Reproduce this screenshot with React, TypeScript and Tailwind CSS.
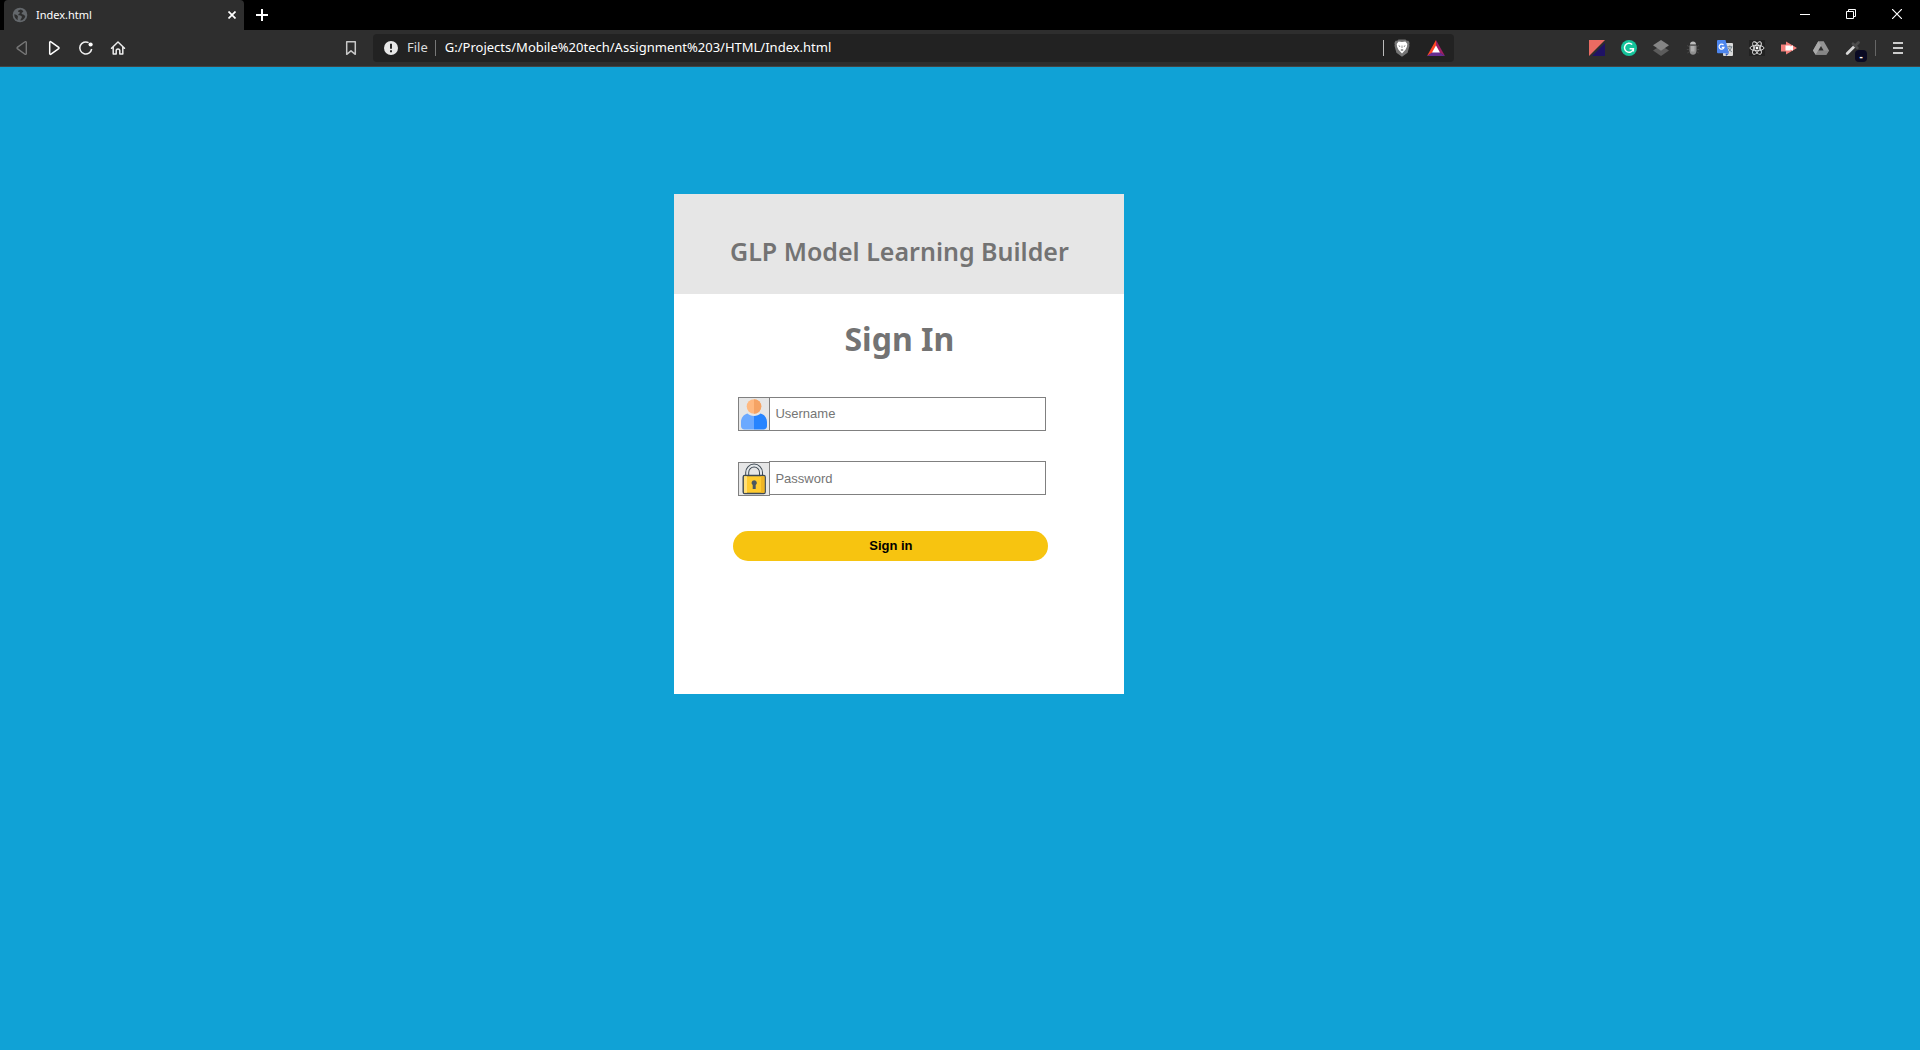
import React from "react";

type IconProps = { children: React.ReactNode; className?: string };

function Glyph({ children, className = "h-4 w-4" }: IconProps) {
  return (
    <svg viewBox="0 0 16 16" className={className} fill="none" aria-hidden="true">
      {children}
    </svg>
  );
}

function ToolButton({ label, children }: { label: string; children: React.ReactNode }) {
  return (
    <button type="button" aria-label={label} className="relative flex h-8 w-8 items-center justify-center">
      {children}
    </button>
  );
}

function WindowButton({ label, children }: { label: string; children: React.ReactNode }) {
  return (
    <button type="button" aria-label={label} className="flex h-7 w-[46px] items-center justify-center">
      <svg viewBox="0 0 10 10" className="h-[10px] w-[10px]" fill="none" stroke="#fff" aria-hidden="true">
        {children}
      </svg>
    </button>
  );
}

function TabStrip() {
  return (
    <div className="flex h-[30px] bg-black pl-1">
      <div className="flex w-60 items-center rounded-t bg-[#2e2e2e] pl-2 pr-1">
        <Glyph>
          <circle cx="8" cy="8" r="7.3" fill="#63676b" />
          <path d="M8.500 2.500C7 3 5.800 3.600 6.200 4.600c.4.900 1.500.3 1.700 1.200.1.900-1.500 1-1.600 1.900-.1.900 1.700.5 2.700 1.100 1.200.7 1 1.800.3 2.600-.6.700-.7 1.400-1 2.200 2.700-.4 4.700-2.300 5-4.700-1-.2-1.100-1.200-2.200-1.400-1.200-.2-1.700-.6-1.400-1.500.3-.8 1.500-.6 1.600-1.400-.4-1.100-1.500-1.900-2.800-2.100z" fill="#2e2e2e" />
          <path d="M2.300 7.300c1.300.4 2.700.6 3.400 1.600.7 1.100-.4 1.700-.1 2.700l.3 1.500C3.500 12.200 2.100 10 2.300 7.300z" fill="#2e2e2e" />
        </Glyph>
        <span className="ml-2 flex-1 text-[11px] text-white">Index.html</span>
        <button type="button" aria-label="Close tab" className="flex h-4 w-4 items-center justify-center">
          <svg viewBox="0 0 8 8" className="h-2 w-2" fill="none" stroke="#fff" strokeWidth="1.7" aria-hidden="true">
            <path d="M.5.5l7 7M7.500.5l-7 7" />
          </svg>
        </button>
      </div>
      <button type="button" aria-label="New tab" className="flex w-9 items-center justify-center">
        <svg viewBox="0 0 12 12" className="h-3 w-3" stroke="#fff" strokeWidth="2" aria-hidden="true">
          <path d="M6 0v12M0 6h12" />
        </svg>
      </button>
      <div className="ml-auto flex">
        <WindowButton label="Minimize">
          <path d="M0 5.500h10" />
        </WindowButton>
        <WindowButton label="Restore">
          <path d="M.5 2.500h7v7h-7zM2.500 2.500v-2h7v7h-2" />
        </WindowButton>
        <WindowButton label="Close">
          <path d="M0 0l10 10M10 0L0 10" strokeWidth="1.200" />
        </WindowButton>
      </div>
    </div>
  );
}

function AddressBar() {
  return (
    <div className="flex h-7 flex-1 items-center rounded bg-[#222] pl-[11px] pr-[9px]">
      <Glyph className="h-[14px] w-[14px]">
        <circle cx="8" cy="8" r="8" fill="#e8e8e8" />
        <path d="M8 3.200v5.600M8 10.600v2.200" stroke="#222" strokeWidth="2.200" />
      </Glyph>
      <span className="ml-[9px] text-[13px] text-[#dcdcdc]">File</span>
      <span className="ml-[7px] h-4 w-px bg-[#777]" />
      <input
        type="text"
        aria-label="Address"
        defaultValue="G:/Projects/Mobile%20tech/Assignment%203/HTML/Index.html"
        className="ml-[9px] min-w-0 flex-1 bg-transparent text-[13px] text-white outline-none"
      />
      <span className="h-4 w-px bg-[#bbb]" />
      <button type="button" aria-label="Shields" className="ml-[10px] flex h-5 w-4 items-center justify-center">
        <svg viewBox="0 0 16 18" className="h-[18px] w-4" aria-hidden="true">
          <path d="M4.500.4h7l1.300 1.400 1.600-.1 1.200 2.300-.4 1.500.3 1.300-1.900 7L8 17.800 2.400 13.800.5 6.800l.3-1.300L.4 4l1.200-2.300 1.600.1z" fill="#757575" />
          <path d="M4.600 2.600l3.400.5 3.400-.5 1.900 2.300-.4 2.900-1.400 3L8 14.600l-3.500-3.800-1.400-3-.4-2.900z" fill="#fff" />
          <path d="M4.200 6.200l2.300.8-.8.900zM11.800 6.200l-2.300.8.8.9zM7.600 6.500h.8V9h-.8zM6.300 10.900L8 10l1.700.9L8 12z" fill="#757575" />
        </svg>
      </button>
      <button type="button" aria-label="Rewards" className="ml-[17px] flex h-5 w-[18px] items-center justify-center">
        <svg viewBox="0 0 18 16" className="h-4 w-[18px]" aria-hidden="true">
          <path d="M9 0L0 16l9-5.500z" fill="#ff4724" />
          <path d="M9 0l9 16-9-5.500z" fill="#9e1f63" />
          <path d="M0 16h18l-9-6z" fill="#662d91" />
          <path d="M9 5.600L5 12.400h8z" fill="#fff" />
        </svg>
      </button>
    </div>
  );
}

function Extensions() {
  return (
    <div className="flex items-center">
      <ToolButton label="Screen capture">
        <Glyph>
          <path d="M0 0h16L0 16z" fill="#ea6b62" />
          <path d="M16 3v13H3z" fill="#1f1265" />
        </Glyph>
      </ToolButton>
      <ToolButton label="Grammarly">
        <Glyph>
          <circle cx="8" cy="8" r="8" fill="#15c39a" />
          <path d="M11.200 4.600A4.500 4.500 0 1 0 12.400 8.800H8.600M12.400 8.800v2.600" stroke="#fff" strokeWidth="1.400" />
        </Glyph>
      </ToolButton>
      <ToolButton label="Layers">
        <Glyph>
          <path d="M8 5.500l8 5L8 16 0 10.500z" fill="#5c5c5c" />
          <path d="M8 0l8 5.300-8 5.400L0 5.300z" fill="#858585" />
        </Glyph>
      </ToolButton>
      <ToolButton label="Debugger">
        <Glyph>
          <path d="M5 4.500C5 2.500 6.200 1.500 8 1.500s3 1 3 3z" fill="#bcbcbc" />
          <path d="M4.500 5.500h7v5c0 2.800-1.500 4.200-3.500 4.200s-3.500-1.400-3.500-4.200z" fill="#8e8e8e" />
          <path d="M6 6h3.500v5.500H6z" fill="#adadad" />
          <path d="M2 5.500l1.800 1M1.800 9.500h2M2.300 13l1.700-1M14 5.500l-1.800 1M14.200 9.500h-2M13.700 13L12 12" stroke="#474747" />
        </Glyph>
      </ToolButton>
      <ToolButton label="Translate">
        <Glyph>
          <rect x="6" y="3" width="10" height="13" rx="1" fill="#dadada" />
          <path d="M9 16l3-2.600H8.500z" fill="#2f55b5" />
          <path d="M0 1a1 1 0 0 1 1-1h7.500L12 13.300H1a1 1 0 0 1-1-1z" fill="#4d86ee" />
          <path d="M6.500 5A2.500 2.500 0 1 0 7 7.300H4.800" stroke="#fff" strokeWidth="1.200" />
          <path d="M10.300 6.800h5M12.800 5.500v1.300M14.500 7c-.5 2-1.600 3.500-3 4.500M11.500 8c.8 1.800 2 3 3.300 3.800" stroke="#6c7b83" />
        </Glyph>
      </ToolButton>
      <ToolButton label="React tools">
        <Glyph>
          <rect width="16" height="16" fill="#222" />
          <g stroke="#e6e6e6" strokeWidth=".9">
            <ellipse cx="8" cy="8" rx="7" ry="2.700" />
            <ellipse cx="8" cy="8" rx="7" ry="2.700" transform="rotate(60 8 8)" />
            <ellipse cx="8" cy="8" rx="7" ry="2.700" transform="rotate(120 8 8)" />
          </g>
          <circle cx="8" cy="8" r="1.400" fill="#fff" />
        </Glyph>
      </ToolButton>
      <ToolButton label="Video">
        <Glyph>
          <path d="M0 4.500h5V1.500L16 8 5 14.500v-3H0z" fill="#f47f7b" />
          <path d="M4.500 5.500h5v1L12 5.300v5.400L9.500 9.500v1h-5z" fill="#fff" />
        </Glyph>
      </ToolButton>
      <ToolButton label="Drive">
        <Glyph>
          <path d="M5.300 1.200h5.400L16 10.400l-2.700 4.400H2.700L0 10.400z" fill="#949494" />
          <path d="M5.300 1.200L8 5.800l-5.300 9L0 10.400z" fill="#aaa" />
          <path d="M5.300 10.400H16l-2.700 4.400H2.700z" fill="#868686" />
          <path d="M8 5.900l2.600 4.500H5.400z" fill="#2e2e2e" />
        </Glyph>
      </ToolButton>
      <ToolButton label="Color picker">
        <Glyph>
          <path d="M2.200 13.500L9.500 6.200" stroke="#d8d8d8" strokeWidth="2.800" strokeLinecap="round" />
          <path d="M8 3.800l4.300 4.300M10.500 5.500l3-3" stroke="#4d4d4d" strokeWidth="2.800" strokeLinecap="round" />
        </Glyph>
        <span className="absolute left-[18px] top-[18px] flex h-3 w-3 items-center justify-center rounded-sm bg-[#0a0a23] text-[10px] font-bold leading-none text-white">
          -
        </span>
      </ToolButton>
    </div>
  );
}

function Toolbar() {
  return (
    <div className="flex h-[37px] items-center border-b border-[#444] bg-[#2e2e2e] pl-[6px] pr-[6px]">
      <ToolButton label="Back">
        <Glyph>
          <path d="M12.300 2.300v11.400a.8.800 0 0 1-1.300.5L3.300 8.600a.8.800 0 0 1 0-1.200L11 1.800a.8.800 0 0 1 1.300.5z" stroke="#777" strokeWidth="1.400" />
        </Glyph>
      </ToolButton>
      <ToolButton label="Forward">
        <Glyph>
          <path d="M3.700 2.300v11.400a.8.800 0 0 0 1.300.5l7.700-5.600a.8.800 0 0 0 0-1.200L5 1.800a.8.800 0 0 0-1.300.5z" stroke="#fff" strokeWidth="1.500" />
        </Glyph>
      </ToolButton>
      <ToolButton label="Reload">
        <Glyph>
          <path d="M10.600 2.600A6 6 0 1 0 13.700 9" stroke="#f0f0f0" strokeWidth="1.500" />
          <circle cx="12.600" cy="4.500" r="2.100" fill="#fff" />
        </Glyph>
      </ToolButton>
      <ToolButton label="Home">
        <Glyph>
          <path d="M1.500 8.200L8 2l6.500 6.200M3.200 7v7h3v-3.300a1.800 1.800 0 0 1 3.600 0V14h3V7" stroke="#ececec" strokeWidth="1.500" strokeLinejoin="round" strokeLinecap="round" />
        </Glyph>
      </ToolButton>
      <div className="flex min-w-0 flex-1 items-center pl-[201px] pr-[127px]">
        <div className="mr-[6px]">
          <ToolButton label="Bookmark">
            <Glyph>
              <path d="M3.700 1.700h8.600v12.600L8 10.800l-4.300 3.500z" stroke="#c8c8c8" strokeWidth="1.500" strokeLinejoin="round" />
            </Glyph>
          </ToolButton>
        </div>
        <AddressBar />
      </div>
      <Extensions />
      <span className="ml-[6px] h-4 w-px bg-[#666]" />
      <div className="ml-[6px]">
        <ToolButton label="Menu">
          <Glyph>
            <path d="M3 3h10M3 8h10M3 13h10" stroke="#ccc" strokeWidth="2" />
          </Glyph>
        </ToolButton>
      </div>
    </div>
  );
}

function UserIcon() {
  return (
    <svg viewBox="0 0 30 32" className="h-8 w-[30px]" aria-hidden="true">
      <circle cx="15" cy="8.500" r="7.300" fill="#ffb980" />
      <path d="M15 1.200a7.300 7.300 0 0 1 0 14.600z" fill="#f5a364" />
      <path d="M8.500 15.500c1.500 1.500 3.800 2.500 6.500 2.500v13.500H5.500C3.500 31.500 2 30 2 28v-4c0-4 2.500-7.500 6.500-8.500z" fill="#6ba9ff" />
      <path d="M21.500 15.500c-1.500 1.500-3.800 2.500-6.500 2.500v13.500h9.500c2 0 3.500-1.500 3.500-3.500v-4c0-4-2.500-7.500-6.500-8.500z" fill="#2684ff" />
    </svg>
  );
}

function LockIcon() {
  return (
    <svg viewBox="0 0 30 32" className="h-8 w-[30px]" aria-hidden="true">
      <path d="M8.200 13V9.500a6.900 6.900 0 0 1 13.800 0V13" fill="none" stroke="#3f4a54" strokeWidth="4" />
      <path d="M8.200 13V9.500a6.900 6.900 0 0 1 13.800 0V13" fill="none" stroke="#e4e8ea" strokeWidth="2" />
      <rect x="4.200" y="12.500" width="22" height="18" rx="1.500" fill="#ffcb2f" stroke="#3f4a54" strokeWidth="1.400" />
      <path d="M5 13.200h3v16.600H5z" fill="#ffdf78" />
      <path d="M22 13.200h3.500v16.600H22z" fill="#efb526" />
      <path d="M15.200 17.200a2.700 2.700 0 0 1 1.500 4.900V26h-3v-3.900a2.700 2.700 0 0 1 1.500-4.900z" fill="#4b5660" />
    </svg>
  );
}

function SignInCard() {
  return (
    <section className="ml-[35%] min-h-[500px] w-[450px] bg-white text-[#737373]">
      <header className="flex h-[100px] items-center justify-center bg-[#e6e6e6] pt-[14px]">
        <h1 className="font-['Noto_Sans'] text-[25px] font-semibold leading-8">GLP Model Learning Builder</h1>
      </header>
      <h2 className="mt-[23px] text-center font-['Noto_Sans'] text-[32px] font-bold leading-[44px]">Sign In</h2>
      <form className="mt-9 pl-[59px] font-['Liberation_Sans'] text-[13px]" onSubmit={(e) => e.preventDefault()}>
        <div className="ml-[5px] flex h-[34px] items-stretch">
          <label htmlFor="username" aria-label="Username" className="w-8 border border-[#808080] bg-[#e6e6e6]">
            <UserIcon />
          </label>
          <input id="username" type="text" placeholder="Username" className="-ml-px w-[277px] border border-[#808080] px-[5px] text-black outline-none placeholder:text-[#757575]" />
        </div>
        <div className="ml-[5px] mt-[30px] flex h-[35px]">
          <label htmlFor="password" aria-label="Password" className="h-[34px] w-8 self-end border border-[#808080] bg-[#e6e6e6]">
            <LockIcon />
          </label>
          <input id="password" type="password" placeholder="Password" className="-ml-px h-[34px] w-[277px] border border-[#808080] bg-white px-[5px] text-black outline-none placeholder:text-[#757575]" />
        </div>
        <button type="submit" className="mt-[35px] h-[30px] w-[315px] rounded-full bg-[#f7c410] font-bold text-black">
          Sign in
        </button>
      </form>
    </section>
  );
}

export default function App() {
  return (
    <div className="flex min-h-screen flex-col bg-[#10a2d6] font-['Noto_Sans','Open_Sans',sans-serif]">
      <TabStrip />
      <Toolbar />
      <main className="px-2 pt-[127px]">
        <SignInCard />
      </main>
    </div>
  );
}
